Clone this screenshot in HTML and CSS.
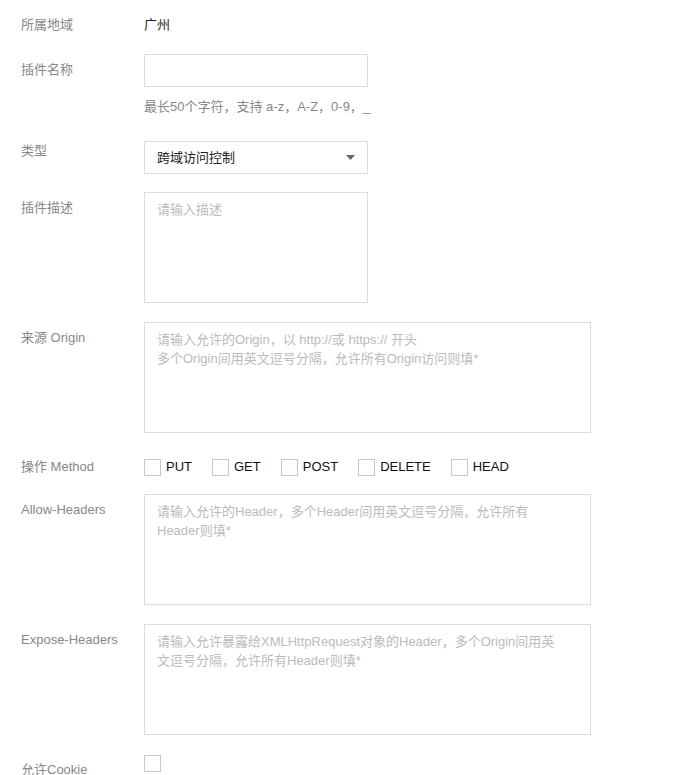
FILE: index.html
```html
<!DOCTYPE html>
<html lang="zh-CN">
<head>
<meta charset="utf-8">
<title>插件配置</title>
<link rel="stylesheet" href="styles.css">
</head>
<body>
<form class="form">
  <div class="row row-static">
    <div class="label">所属地域</div>
    <div class="value">广州</div>
  </div>

  <div class="row row-name">
    <div class="label">插件名称</div>
    <div class="control">
      <input class="input" type="text">
      <div class="hint">最长50个字符，支持 a-z，A-Z，0-9，_</div>
    </div>
  </div>

  <div class="row row-type">
    <div class="label label-tight">类型</div>
    <div class="select">
      <select class="select-native">
        <option>跨域访问控制</option>
      </select>
      <svg class="select-arrow" width="9" height="5" viewBox="0 0 9 5"><path d="M0 0H9L4.5 5Z" fill="#666"/></svg>
    </div>
  </div>

  <div class="row row-desc">
    <div class="label">插件描述</div>
    <textarea class="textarea textarea-small" placeholder="请输入描述"></textarea>
  </div>

  <div class="row row-area">
    <div class="label">来源 Origin</div>
    <textarea class="textarea textarea-wide" placeholder="请输入允许的Origin，以 http://或 https:// 开头&#10;多个Origin间用英文逗号分隔，允许所有Origin访问则填*"></textarea>
  </div>

  <div class="row row-method">
    <div class="label label-center">操作 Method</div>
    <div class="checks">
      <label class="check"><input type="checkbox" class="box"><span>PUT</span></label>
      <label class="check"><input type="checkbox" class="box"><span>GET</span></label>
      <label class="check"><input type="checkbox" class="box"><span>POST</span></label>
      <label class="check"><input type="checkbox" class="box"><span>DELETE</span></label>
      <label class="check"><input type="checkbox" class="box"><span>HEAD</span></label>
    </div>
  </div>

  <div class="row row-allow">
    <div class="label">Allow-Headers</div>
    <textarea class="textarea textarea-wide" placeholder="请输入允许的Header，多个Header间用英文逗号分隔，允许所有&#10;Header则填*"></textarea>
  </div>

  <div class="row row-area">
    <div class="label">Expose-Headers</div>
    <textarea class="textarea textarea-wide" placeholder="请输入允许暴露给XMLHttpRequest对象的Header，多个Origin间用英&#10;文逗号分隔，允许所有Header则填*"></textarea>
  </div>

  <div class="row row-cookie">
    <div class="label label-cookie">允许Cookie</div>
    <input type="checkbox" class="box">
  </div>
</form>
</body>
</html>
```

FILE: styles.css
```css
html, body {
  margin: 0;
  padding: 0;
  background: #fff;
}

body {
  font-family: "Liberation Sans", "Noto Sans CJK SC", sans-serif;
  font-size: 13px;
  line-height: 18px;
  color: #333;
}

.form {
  padding: 16px 0 0 21px;
  display: flex;
  flex-direction: column;
}

.row {
  display: flex;
  align-items: flex-start;
}

.label {
  width: 123px;
  flex: none;
  color: #888;
  padding-top: 7px;
  white-space: nowrap;
}

.row-static .label {
  padding-top: 0;
}

.label-tight {
  padding-top: 1px;
}

.label-center {
  padding-top: 0;
}

.label-cookie {
  padding-top: 6px;
}

.value {
  color: #222;
}

.row-name { margin-top: 20px; }
.row-type { margin-top: 25px; }
.row-desc { margin-top: 18px; }
.row-area { margin-top: 19px; }
.row-method { margin-top: 25px; align-items: center; }
.row-allow { margin-top: 18px; }
.row-cookie { margin-top: 20px; }

.control {
  display: flex;
  flex-direction: column;
}

.input {
  box-sizing: border-box;
  width: 224px;
  height: 33px;
  margin: 0;
  border: 1px solid #dcdcdc;
  border-radius: 0;
  padding: 0 12px;
  font: inherit;
  color: #333;
  outline: none;
}

.hint {
  margin-top: 11px;
  color: #888;
  white-space: nowrap;
}

.select {
  position: relative;
  width: 224px;
  height: 33px;
}

.select-native {
  box-sizing: border-box;
  width: 100%;
  height: 100%;
  margin: 0;
  appearance: none;
  -webkit-appearance: none;
  background: #fff;
  border: 1px solid #dcdcdc;
  border-radius: 0;
  padding: 0 30px 0 12px;
  font: inherit;
  color: #222;
  outline: none;
}

.select-arrow {
  position: absolute;
  left: 202px;
  top: 14px;
  pointer-events: none;
}

.textarea {
  box-sizing: border-box;
  height: 111px;
  margin: 0;
  border: 1px solid #dcdcdc;
  border-radius: 0;
  padding: 7px 12px;
  font: inherit;
  line-height: 19px;
  color: #333;
  resize: none;
  outline: none;
  display: block;
}

.textarea::placeholder {
  color: #bbb;
  opacity: 1;
}

.textarea-small {
  width: 224px;
}

.textarea-wide {
  width: 447px;
}

.checks {
  display: flex;
  align-items: center;
  gap: 20px;
}

.check {
  display: flex;
  align-items: center;
  gap: 5px;
  color: #111;
}

.box {
  appearance: none;
  -webkit-appearance: none;
  box-sizing: border-box;
  width: 17px;
  height: 17px;
  margin: 0;
  border: 1px solid #c8c8c8;
  background: #fff;
  flex: none;
}
```
